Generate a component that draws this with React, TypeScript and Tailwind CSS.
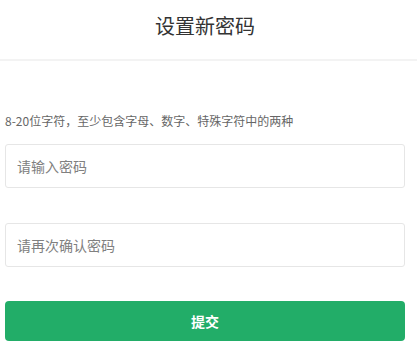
import React, { useState } from "react";

const font = { fontFamily: '"Noto Sans CJK SC", "Noto Sans", sans-serif' };

const App: React.FC = () => {
  const [pwd, setPwd] = useState("");
  const [confirm, setConfirm] = useState("");

  return (
    <div className="min-h-[350px] w-full bg-white" style={font}>
      <header className="flex h-[61px] w-full items-center justify-center border-b-2 border-[#f3f3f3] pb-[8px] pr-[7px]">
        <h1 className="text-[20px] font-normal text-[#333333]">设置新密码</h1>
      </header>

      <div className="w-[410px] px-[5px]">
        <p className="mt-[51px] text-[12px] leading-[18px] text-[#666666]">
          8-20位字符，至少包含字母、数字、特殊字符中的两种
        </p>

        <input
          type="password"
          value={pwd}
          onChange={(e) => setPwd(e.target.value)}
          placeholder="请输入密码"
          className="mt-[14px] block h-[44px] w-full rounded-[3px] border border-[#e6e6e6] px-[11px] text-[14px] text-[#333] outline-none placeholder:text-[#808080]"
        />

        <input
          type="password"
          value={confirm}
          onChange={(e) => setConfirm(e.target.value)}
          placeholder="请再次确认密码"
          className="mt-[35px] block h-[44px] w-full rounded-[3px] border border-[#e6e6e6] px-[11px] text-[14px] text-[#333] outline-none placeholder:text-[#808080]"
        />

        <button
          type="button"
          className="mt-[34px] flex h-[40px] w-full items-center justify-center rounded-[4px] bg-[#22ad68] text-[14px] font-bold text-white"
        >
          提交
        </button>
      </div>
    </div>
  );
};

export default App;
